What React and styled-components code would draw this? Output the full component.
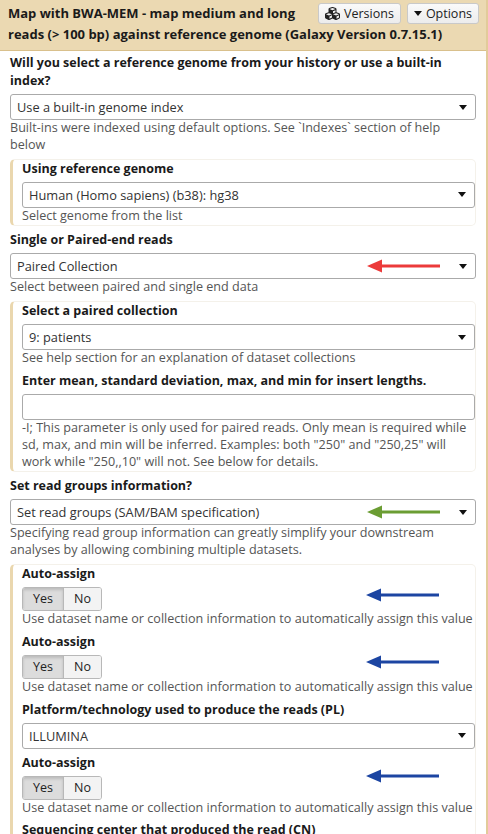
import React from 'react';
import styled, { createGlobalStyle } from 'styled-components';
import { FaCubes } from 'react-icons/fa';

const GlobalStyle = createGlobalStyle`
  body {
    margin: 0;
    background: #fff;
    font-family: "Open Sans", "DejaVu Sans", sans-serif;
    color: #222;
  }
`;

const Panel = styled.div`
  width: 486px;
  min-height: 834px;
  border-right: 2px solid #e2cb9a;
  background: #fff;
`;

const Header = styled.div`
  background: #ebd9b2;
  border-bottom: 1px solid #d9c08c;
  padding: 3px 7px 5px 8px;
  overflow: hidden;
`;

const HeaderButtons = styled.div`
  float: right;
  display: flex;
  gap: 6px;
  margin-left: 8px;
`;

const HeaderButton = styled.button`
  display: flex;
  align-items: center;
  gap: 4px;
  height: 21px;
  padding: 0 6px;
  border: 1px solid #c9c9c9;
  border-radius: 3px;
  background: linear-gradient(#fafafa, #ececec);
  font-family: inherit;
  font-size: 12.5px;
  color: #222;
`;

const Title = styled.div`
  font-size: 13px;
  font-weight: bold;
  line-height: 21px;
  color: #1a1a1a;
`;

const Body = styled.div`
  padding: 3px 10px 0 10px;
  display: flex;
  flex-direction: column;
  gap: 5px;
`;

const Row = styled.div`
  display: flex;
  flex-direction: column;
`;

const Label = styled.div`
  font-size: 12.5px;
  font-weight: bold;
  line-height: 18px;
  margin-bottom: 4px;
  color: #1a1a1a;
`;

const Field = styled.div`
  position: relative;
`;

const SelectBox = styled.div`
  height: 24px;
  border: 1px solid #aaa;
  border-radius: 3px;
  background: #fff;
  display: flex;
  align-items: center;
  padding: 0 8px 0 6px;
  font-size: 12.8px;
  color: #333;
`;

const SelectText = styled.span`
  flex: 1;
`;

const Caret = styled.span`
  width: 0;
  height: 0;
  border-left: 4px solid transparent;
  border-right: 4px solid transparent;
  border-top: 5px solid #111;
`;

const TextInput = styled.div`
  height: 24px;
  border: 1px solid #aaa;
  border-radius: 3px;
  background: #fff;
`;

const Help = styled.div`
  font-size: 12.6px;
  line-height: 16.8px;
  color: #555;
`;

const Section = styled.div`
  border: 1px solid #f4f1ea;
  border-left: 3px solid #ead7ae;
  border-radius: 5px;
  padding: 0 0 1px 9px;
  display: flex;
  flex-direction: column;
  gap: 5px;
`;

const Toggle = styled.div`
  display: inline-flex;
  height: 22px;
  border: 1px solid #b8b8b8;
  border-radius: 3px;
  overflow: hidden;
  align-self: flex-start;
`;

const ToggleOption = styled.div`
  display: flex;
  align-items: center;
  justify-content: center;
  width: ${p => (p.$wide ? '40px' : '37px')};
  font-size: 12.5px;
  color: #222;
  background: ${p => (p.$active ? '#dcdcdc' : '#f3f3f3')};
  box-shadow: ${p => (p.$active ? 'inset 0 2px 3px rgba(0,0,0,0.15)' : 'none')};
  border-right: ${p => (p.$active ? '1px solid #b8b8b8' : 'none')};
`;

const ToggleRow = styled.div`
  position: relative;
  display: flex;
  flex-direction: column;
`;

const ArrowWrap = styled.div`
  position: absolute;
  right: 35px;
  top: ${p => p.$top};
  line-height: 0;
  pointer-events: none;
`;

const Arrow = ({ color, top = '5px' }) => (
  <ArrowWrap $top={top}>
    <svg width="74" height="16" viewBox="0 0 74 16">
      <line x1="10" y1="8" x2="73" y2="8" stroke={color} strokeWidth="3" />
      <polygon points="0,8 15,1.5 15,14.5" fill={color} />
    </svg>
  </ArrowWrap>
);

const Select = ({ value, arrow }) => (
  <Field>
    <SelectBox>
      <SelectText>{value}</SelectText>
      <Caret />
    </SelectBox>
    {arrow && <Arrow color={arrow} />}
  </Field>
);

const AutoAssign = ({ arrowTop }) => (
  <ToggleRow>
    <Label>Auto-assign</Label>
    <Toggle>
      <ToggleOption $active $wide>Yes</ToggleOption>
      <ToggleOption>No</ToggleOption>
    </Toggle>
    <Arrow color="#1c45a2" top={arrowTop} />
    <Help>Use dataset name or collection information to automatically assign this value</Help>
  </ToggleRow>
);

const App = () => (
  <>
    <GlobalStyle />
    <Panel>
      <Header>
        <HeaderButtons>
          <HeaderButton><FaCubes size={15} />Versions</HeaderButton>
          <HeaderButton><Caret />Options</HeaderButton>
        </HeaderButtons>
        <Title>
          Map with BWA-MEM - map medium and long reads (&gt; 100 bp) against reference genome (Galaxy Version 0.7.15.1)
        </Title>
      </Header>
      <Body>
        <Row>
          <Label>Will you select a reference genome from your history or use a built-in index?</Label>
          <Select value="Use a built-in genome index" />
          <Help>Built-ins were indexed using default options. See `Indexes` section of help below</Help>
        </Row>
        <Section>
          <Row>
            <Label>Using reference genome</Label>
            <Select value="Human (Homo sapiens) (b38): hg38" />
            <Help>Select genome from the list</Help>
          </Row>
        </Section>
        <Row>
          <Label>Single or Paired-end reads</Label>
          <Select value="Paired Collection" arrow="#ec3a3a" />
          <Help>Select between paired and single end data</Help>
        </Row>
        <Section>
          <Row>
            <Label>Select a paired collection</Label>
            <Select value="9: patients" />
            <Help>See help section for an explanation of dataset collections</Help>
          </Row>
          <Row>
            <Label>Enter mean, standard deviation, max, and min for insert lengths.</Label>
            <TextInput />
            <Help>-I; This parameter is only used for paired reads. Only mean is required while sd, max, and min will be inferred. Examples: both "250" and "250,25" will work while "250,,10" will not. See below for details.</Help>
          </Row>
        </Section>
        <Row>
          <Label>Set read groups information?</Label>
          <Select value="Set read groups (SAM/BAM specification)" arrow="#6b9d33" />
          <Help>Specifying read group information can greatly simplify your downstream analyses by allowing combining multiple datasets.</Help>
        </Row>
        <Section>
          <AutoAssign arrowTop="22px" />
          <AutoAssign arrowTop="21px" />
          <Row>
            <Label>Platform/technology used to produce the reads (PL)</Label>
            <Select value="ILLUMINA" />
          </Row>
          <AutoAssign arrowTop="14px" />
          <Row>
            <Label>Sequencing center that produced the read (CN)</Label>
            <Select value="" />
          </Row>
        </Section>
      </Body>
    </Panel>
  </>
);

export default App;
